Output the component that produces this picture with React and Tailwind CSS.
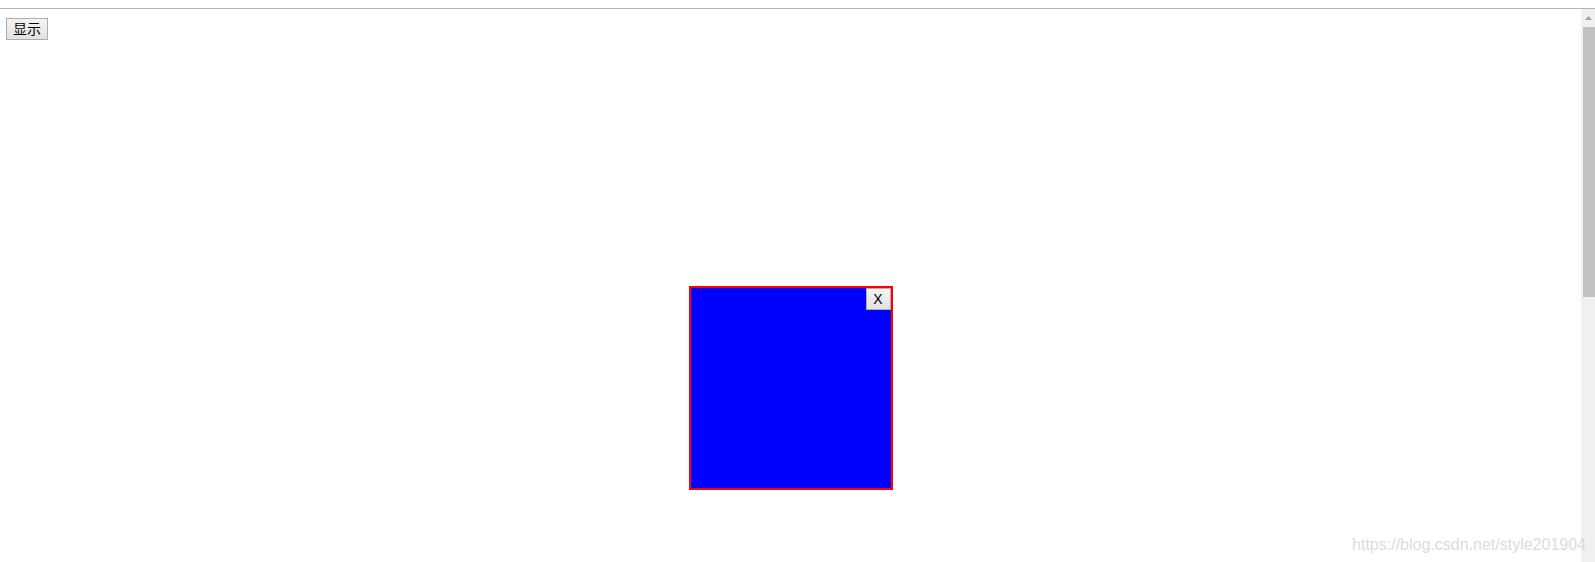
import { useState } from 'react';

// Classic-looking gray button, like the default Windows form button
const btn = 'border border-[#adadad] bg-gradient-to-b from-[#f4f4f4] to-[#e2e2e2] text-black leading-none';

function Scrollbar() {
  return (
    <div className="w-[14px] shrink-0 bg-[#f0f0f0] flex flex-col items-end">
      <div className="h-[18px] w-full flex items-center justify-center">
        <svg width="7" height="4" viewBox="0 0 7 4"><path d="M3.5 0L7 4H0z" fill="#a3a3a3" /></svg>
      </div>
      <div className="w-[12px] h-[270px] bg-[#c1c1c1]" />
    </div>
  );
}

export default function App() {
  const [open, setOpen] = useState(true);

  return (
    <div className="relative h-[562px] overflow-hidden bg-white flex flex-col" style={{ fontFamily: '"Liberation Sans", Arial, "Noto Sans CJK SC", sans-serif' }}>
      <div className="h-[8px] shrink-0" />
      <div className="h-px shrink-0 bg-[#b5b5b5]" />

      <div className="flex-1 flex min-h-0">
        <div className="flex-1 flex flex-col">
          <div className="flex pt-[9px] pl-[6px]">
            <button onClick={() => setOpen(true)} className={`${btn} w-[42px] h-[22px] text-[14px]`}>
              显示
            </button>
          </div>

          {open && (
            <div className="relative mt-[246px] mx-auto w-[204px] h-[204px] border-2 border-[#ff0000] bg-[#0000ff]">
              <button
                onClick={() => setOpen(false)}
                className={`${btn} absolute top-0 right-0 w-[25px] h-[22px] text-[14px]`}
              >
                X
              </button>
            </div>
          )}
        </div>
        <Scrollbar />
      </div>

      <div className="absolute right-[9px] bottom-[9px] text-[16px] leading-none text-[#dcdcdc]">
        https://blog.csdn.net/style201904
      </div>
    </div>
  );
}
